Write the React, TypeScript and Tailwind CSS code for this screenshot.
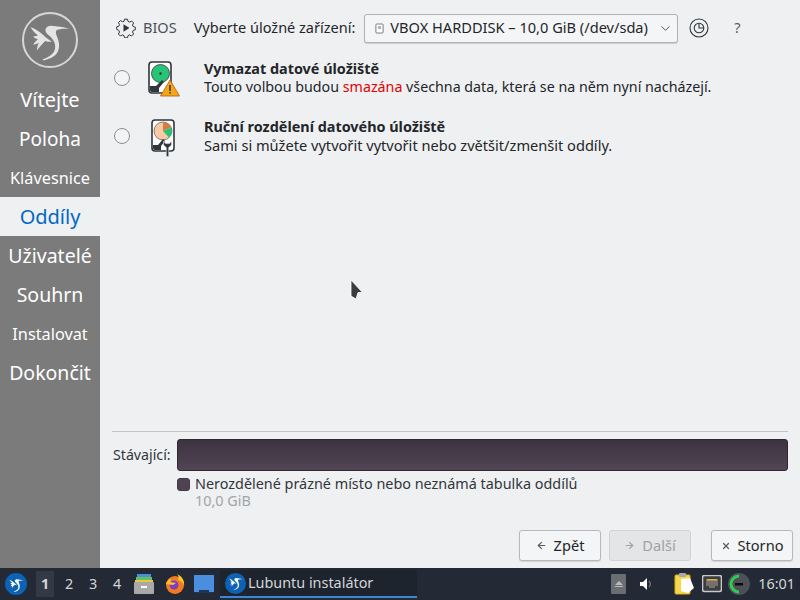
import { ArrowLeft, ArrowRight, ChevronDown, X } from "lucide-react";

const font = "[font-family:'Noto_Sans','Open_Sans',sans-serif]";

const steps = [
  { name: "Vítejte", size: "text-[20px]" },
  { name: "Poloha", size: "text-[19px] pt-[1px]" },
  { name: "Klávesnice", size: "text-[16.3px] pt-[1px]" },
  { name: "Oddíly", size: "text-[20px]", active: true },
  { name: "Uživatelé", size: "text-[19.5px]" },
  { name: "Souhrn", size: "text-[19.5px]" },
  { name: "Instalovat", size: "text-[16.3px] pt-[1px]" },
  { name: "Dokončit", size: "text-[19.5px]" },
];

function Bird({ className, stroke = "#fff" }: { className?: string; stroke?: string }) {
  return (
    <svg viewBox="0 0 56 56" fill="none" className={className}>
      <path d="M23 17c1-3 4-5 8-4 3 0 11 1 18 3-5 0-10 0-13 1-2 1-2 3-1 6 2 5 4 10 2 16-2 6-8 9-16 11l-1-1c5-2 11-5 13-10 2-6-1-11-5-15-3-2-5-4-5-7z" fill={stroke} />
      <path d="M7 14c5 2 10 5 14 9 3 3 6 5 9 7-3 0-5 0-7-1-3 3-6 6-9 10 0-3 1-6 2-8-2 1-4 2-6 2 1-2 3-4 5-6-2 0-4-1-5-3 2 0 4 0 5-1-3-2-6-5-8-9z" fill={stroke} />
    </svg>
  );
}

function Sidebar() {
  return (
    <aside className="w-[100px] shrink-0 bg-[#7b7b7b] flex flex-col">
      <div className="h-[80px] flex justify-center pt-[12px]">
        <div className="w-[56px] h-[56px] rounded-full border-2 border-[#d6d6d6]">
          <Bird className="w-[52px] h-[52px]" stroke="#e4e4e4" />
        </div>
      </div>
      {steps.map((s) => (
        <div
          key={s.name}
          className={`h-[39px] flex items-center justify-center ${s.size} ${
            s.active ? "bg-[#eff0f2] text-[#0068c8]" : "text-white"
          }`}
        >
          {s.name}
        </div>
      ))}
    </aside>
  );
}

function Radio() {
  return <div className="ml-[2px] w-[16px] h-[16px] rounded-full border border-[#8b8d8f] bg-[#f3f4f5] shrink-0" />;
}

function WipeIcon() {
  return (
    <svg viewBox="0 0 32 36" className="w-[32px] h-[36px] mt-[2px]">
      <rect x="1" y="1" width="22" height="31" rx="3" fill="#fff" stroke="#31363b" strokeWidth="1.6" />
      <circle cx="12.5" cy="12.5" r="9" fill="#27c476" stroke="#31363b" strokeWidth="0.8" />
      <circle cx="12.5" cy="12.5" r="1.2" fill="#31363b" />
      <path d="M2 25h6l6-6 2 2-5 6v4H4a2 2 0 0 1-2-2z" fill="#31363b" />
      <path d="M22 19l9.5 16H12.5z" fill="#f5a70f" stroke="#b4561a" strokeWidth="0.8" />
      <rect x="21.2" y="24" width="1.6" height="6" fill="#31363b" />
      <rect x="21.2" y="31" width="1.6" height="1.6" fill="#31363b" />
    </svg>
  );
}

function ManualIcon() {
  return (
    <svg viewBox="0 0 26 38" className="w-[26px] h-[38px] mt-[4px]">
      <rect x="1" y="1" width="22" height="31" rx="3" fill="#fff" stroke="#31363b" strokeWidth="1.6" />
      <circle cx="12" cy="12" r="9" fill="#fbc9a6" stroke="#31363b" strokeWidth="0.6" />
      <path d="M12 12V3.2a9 9 0 0 1 8.2 5z" fill="#cf7f45" />
      <path d="M12 12l8.2-3.4a9 9 0 0 1-2.2 9.8z" fill="#27c476" />
      <path d="M2 26h5l5-6 2 2-4 5v4H4a2 2 0 0 1-2-2z" fill="#31363b" />
      <path d="M12.5 22v4l2.8 2.6V37.5h2.4v-8.9l2.8-2.6v-4l-2 2.6h-4z" fill="#31363b" stroke="#eff0f2" strokeWidth="0.5" />
    </svg>
  );
}

function BiosIcon() {
  return (
    <svg viewBox="0 0 20 20" fill="none" className="w-[20px] h-[20px] ml-[4px]">
      <path
        d="M8.5 1.2h3l.5 2.2 1.6.7 2-1.1 2 2-1.1 2 .7 1.6 2.1.6v2.6l-2.1.6-.7 1.6 1.1 2-2 2-2-1.1-1.6.7-.5 2.2h-3l-.5-2.2-1.6-.7-2 1.1-2-2 1.1-2-.7-1.6L.7 11.4V8.8l2.1-.6.7-1.6-1.1-2 2-2 2 1.1L8 3.4z"
        stroke="#31363b"
        strokeWidth="1"
      />
      <path d="M7.5 6.2l6 3.8-6 3.8z" fill="#31363b" />
    </svg>
  );
}

function Option({ icon, iconPad, title, textSize, children }: { icon: React.ReactNode; iconPad: string; title: string; textSize: string; children: React.ReactNode }) {
  return (
    <div className="h-[58px] flex items-center">
      <Radio />
      <div className={`w-[74px] ${iconPad} flex shrink-0`}>{icon}</div>
      <div className={`${textSize} leading-[18px] text-[#232629]`}>
        <div className="font-bold text-[14.4px]">{title}</div>
        <div>{children}</div>
      </div>
    </div>
  );
}

function Btn({ icon, label, disabled }: { icon: React.ReactNode; label: string; disabled?: boolean }) {
  return (
    <div
      className={`w-[82px] h-[31px] rounded-[3px] border flex items-center justify-center gap-[7px] text-[14.6px] ${
        disabled
          ? "bg-[#e3e5e7] border-[#d0d2d4] text-[#a0a2a4]"
          : "bg-[#f4f5f6] border-[#b6b8ba] text-[#232629] shadow-[0_1px_1px_rgba(0,0,0,0.12)]"
      }`}
    >
      {icon}
      {label}
    </div>
  );
}

function Main() {
  return (
    <main className="flex-1 bg-[#eff0f2] flex flex-col pl-[12px] pr-[7px] min-w-0 relative">
      <div className="h-[49px] pt-[7px] flex items-center text-[14.5px] text-[#232629]">
        <BiosIcon />
        <span className="ml-[7px] text-[#4d5257]">BIOS</span>
        <span className="ml-[17px]">Vyberte úložné zařízení:</span>
        <div className="ml-[9px] w-[314px] h-[29px] rounded-[3px] border border-[#b0b2b4] bg-[#f4f5f6] shadow-[0_1px_1px_rgba(0,0,0,0.15)] flex items-center pl-[10px] pr-[4px] shrink-0">
          <svg viewBox="0 0 10 12" className="w-[9px] h-[11px] shrink-0">
            <rect x="1" y="1" width="8" height="10" rx="1" fill="#fff" stroke="#6b6f73" />
            <circle cx="5" cy="5" r="2" fill="#b0b4b8" />
          </svg>
          <span className="ml-[6px] flex-1 whitespace-nowrap text-[14.6px]">VBOX HARDDISK – 10,0 GiB (/dev/sda)</span>
          <ChevronDown size={15} strokeWidth={1.2} />
        </div>
        <svg viewBox="0 0 20 20" fill="none" className="w-[20px] h-[20px] ml-[11px] shrink-0">
          <circle cx="10" cy="10" r="9" stroke="#31363b" strokeWidth="1.1" />
          <circle cx="10" cy="10" r="4.8" stroke="#31363b" strokeWidth="1.1" />
          <path d="M10 5.2V10h4.8" stroke="#31363b" strokeWidth="1.1" />
        </svg>
        <span className="ml-[25px] text-[#5a5e62]">?</span>
      </div>
      <Option icon={<WipeIcon />} iconPad="pl-[18px]" textSize="text-[14.26px]" title="Vymazat datové úložiště">
        Touto volbou budou <span className="text-[#e60000]">smazána</span> všechna data, která se na něm nyní nacházejí.
      </Option>
      <Option icon={<ManualIcon />} iconPad="pl-[21px]" textSize="text-[14.6px]" title="Ruční rozdělení datového úložiště">
        Sami si můžete vytvořit vytvořit nebo zvětšit/zmenšit oddíly.
      </Option>

      {/* mouse pointer */}
      <svg viewBox="0 0 14 22" className="absolute left-[250px] top-[279px] w-[14px] h-[22px]">
        <path d="M1 1l11.5 12.5H8L6 20l-5-3z" fill="#3c3c3c" stroke="#fff" strokeWidth="0.8" />
      </svg>

      <div className="flex-1" />
      <div className="mr-[5px] border-t border-[#c2c4c6] pt-[7px]">
        <div className="flex items-center h-[32px] text-[14.2px] text-[#31363b]">
          <span className="w-[65px] pl-[1px]">Stávající:</span>
          <div className="flex-1 h-[32px] rounded-[3px] border border-[#2f2730] bg-gradient-to-b from-[#3d3340] to-[#524556]" />
        </div>
        <div className="ml-[65px] mt-[4px] flex items-start text-[14.4px] leading-[17px]">
          <div className="w-[13px] h-[13px] mt-[3px] rounded-[3px] bg-[#4e4351] border border-[#443a47] shrink-0" />
          <div className="ml-[5px]">
            <div className="text-[#31363b]">Nerozdělené prázné místo nebo neznámá tabulka oddílů</div>
            <div className="text-[#a3a5a7]">10,0 GiB</div>
          </div>
        </div>
      </div>
      <div className="mt-[21px] mb-[7px] flex justify-end">
        <Btn icon={<ArrowLeft size={11} strokeWidth={2.5} className="text-[#5a5e62]" />} label="Zpět" />
        <div className="ml-[8px]">
          <Btn disabled icon={<ArrowRight size={11} strokeWidth={2.5} />} label="Další" />
        </div>
        <div className="ml-[20px]">
          <Btn icon={<X size={10} strokeWidth={3} className="text-[#5a5e62]" />} label="Storno" />
        </div>
      </div>
    </main>
  );
}

function Taskbar() {
  return (
    <footer className="h-[32px] bg-[#232a35] flex items-center text-[14.4px] text-[#d4d6d8] relative">
      <div className="w-[22px] h-[22px] ml-[5px] rounded-full bg-[#0d62b5] flex items-center justify-center">
        <Bird className="w-[19px] h-[19px]" />
      </div>
      <div className="ml-[9px] flex">
        {["1", "2", "3", "4"].map((n, i) => (
          <div key={n} className={`w-[18px] h-[26px] mr-[6px] flex items-center justify-center ${i === 0 ? "bg-[#333a46] font-bold" : ""}`}>
            {n}
          </div>
        ))}
      </div>
      <svg viewBox="0 0 20 20" className="w-[20px] h-[20px] ml-[2px]">
        <rect x="3" y="0" width="14" height="3" fill="#4a8fd8" />
        <rect x="2" y="3" width="16" height="3" fill="#5fc15f" />
        <rect x="1" y="6" width="18" height="2" fill="#e8c44a" />
        <rect x="0" y="8" width="20" height="12" rx="1" fill="#a9a9a9" />
        <rect x="7" y="12" width="6" height="2" fill="#fff" />
      </svg>
      <svg viewBox="0 0 20 20" className="w-[20px] h-[20px] ml-[11px]">
        <circle cx="10" cy="11" r="9" fill="#f47a20" />
        <path d="M12 0c2 2 2 4 1 6 3 1 6 3 6 6 1-5-2-10-7-12z" fill="#fcc52e" />
        <circle cx="9" cy="11" r="4.5" fill="#7b3fc4" />
        <path d="M1 10c1-3 3-5 5-5l-1 3 6 1-3 2z" fill="#fcc52e" />
      </svg>
      <svg viewBox="0 0 20 20" className="w-[20px] h-[20px] ml-[9px]">
        <rect x="0" y="1" width="20" height="17" fill="#4a8fdf" />
        <path d="M0 18h5v-2h10v2h5v1H0z" fill="#1f3650" />
      </svg>
      <div className="ml-[6px] w-[197px] h-[28px] bg-[#1e242e] border-b-2 border-[#3b86d6] flex items-center pl-[5px]">
        <div className="w-[21px] h-[21px] rounded-full bg-[#0d62b5] flex items-center justify-center shrink-0">
          <Bird className="w-[18px] h-[18px]" />
        </div>
        <span className="ml-[2px] whitespace-nowrap">Lubuntu instalátor</span>
      </div>
      <div className="flex-1" />
      <div className="w-[15px] h-[20px] rounded-[1px] bg-[#6a6d72] flex flex-col items-center justify-center gap-[1px]">
        <div className="w-0 h-0 border-x-[4px] border-x-transparent border-b-[4px] border-b-[#b8babc]" />
        <div className="w-[8px] h-[1.5px] bg-[#b8babc]" />
      </div>
      <svg viewBox="0 0 16 16" className="w-[16px] h-[16px] ml-[13px]">
        <path d="M1 6h3l4-4v12l-4-4H1z" fill="#fff" />
        <path d="M10 5a4 4 0 0 1 0 6" stroke="#777" fill="none" strokeWidth="1.2" />
      </svg>
      <svg viewBox="0 0 22 24" className="w-[22px] h-[24px] ml-[19px]">
        <rect x="1" y="3" width="15" height="19" rx="1" fill="#f7d84a" stroke="#e0b020" />
        <rect x="5" y="1" width="7" height="4" rx="1" fill="#a9a9a9" />
        <path d="M7 7l9-1 4 10-6 5-7-2z" fill="#fff" />
      </svg>
      <svg viewBox="0 0 20 18" className="w-[20px] h-[18px] ml-[6px]">
        <rect x="0.5" y="0.5" width="19" height="16" rx="2" fill="#3a3d42" stroke="#c8c8c8" strokeWidth="1.6" />
        <path d="M4 4h12v7h-3v2H7v-2H4z" fill="#75706a" />
        <rect x="5" y="4" width="10" height="1.5" fill="#d9b44a" />
      </svg>
      <svg viewBox="0 0 22 22" className="w-[22px] h-[22px] ml-[6px]">
        <circle cx="11" cy="11" r="11" fill="#4d5057" />
        <path d="M11 3a8 8 0 0 0 0 16" fill="none" stroke="#2ecc52" strokeWidth="3" />
        <rect x="7" y="10" width="8" height="2.5" fill="#0c0c0c" />
      </svg>
      <span className="ml-[8px] mr-[5px] text-[#d4d6d8]">16:01</span>
    </footer>
  );
}

export default function App() {
  return (
    <div className={`w-[800px] h-[600px] flex flex-col overflow-hidden ${font}`}>
      <div className="flex flex-1 min-h-0">
        <Sidebar />
        <Main />
      </div>
      <Taskbar />
    </div>
  );
}
